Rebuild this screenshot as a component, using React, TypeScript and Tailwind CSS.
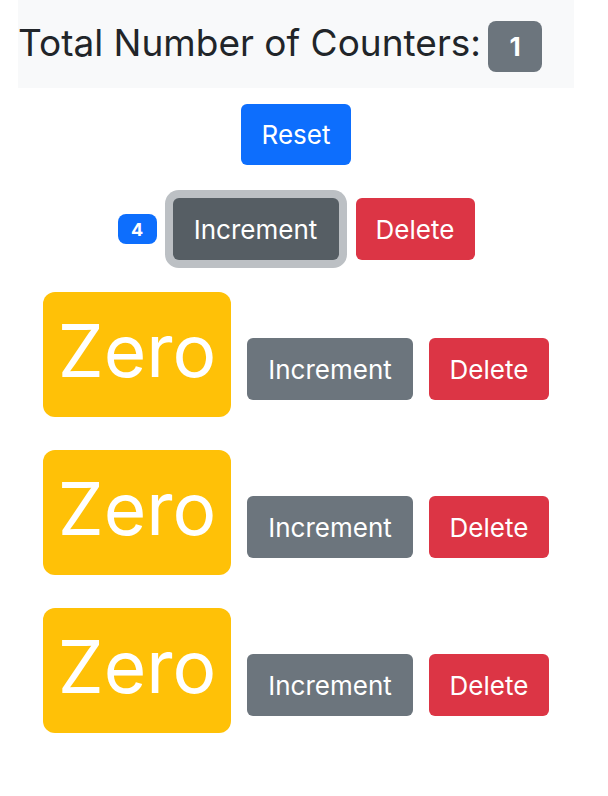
import React from "react";

const font = { fontFamily: "Inter, 'Noto Sans', sans-serif" };

function CounterRow() {
    return (
        <div className="flex justify-center items-start gap-4">
            <span className="w-[188px] h-[125px] rounded-xl bg-[#ffc107] text-white text-[73px] leading-none flex items-center justify-center pb-[8px]">
                Zero
            </span>
            <button className="mt-[46px] h-[62px] w-[166px] rounded-md bg-[#6c757d] text-white text-[26px]">
                Increment
            </button>
            <button className="mt-[46px] h-[62px] w-[120px] rounded-md bg-[#dc3545] text-white text-[26px]">
                Delete
            </button>
        </div>
    );
}

export default function App() {
    return (
        <div className="min-h-screen bg-white text-[#212529]" style={font}>
            <div className="ml-[18px] w-[556px] pb-10">
                <div className="h-[88px] bg-[#f8f9fa] flex items-center gap-[7px]">
                    <h1 className="text-[37px] pb-[2px]">Total Number of Counters:</h1>
                    <span className="mt-[4px] w-[54px] h-[51px] rounded-lg bg-[#6c757d] text-white font-bold text-[26px] flex items-center justify-center">
                        1
                    </span>
                </div>

                <div className="flex justify-center mt-4">
                    <button className="h-[61px] w-[110px] rounded-md bg-[#0d6efd] text-white text-[26px]">
                        Reset
                    </button>
                </div>

                <div className="flex justify-center items-center mt-[33px] gap-4">
                    <span className="w-[39px] h-[30px] rounded-lg bg-[#0d6efd] text-white font-bold text-[18px] flex items-center justify-center">
                        4
                    </span>
                    <button className="h-[62px] w-[166px] rounded-md bg-[#565e64] text-white text-[26px] ring-8 ring-[#bcc0c4]">
                        Increment
                    </button>
                    <button className="h-[62px] w-[119px] rounded-md bg-[#dc3545] text-white text-[26px] ml-px">
                        Delete
                    </button>
                </div>

                <div className="flex flex-col gap-[33px] mt-[32px]">
                    <CounterRow />
                    <CounterRow />
                    <CounterRow />
                </div>
            </div>
        </div>
    );
}
